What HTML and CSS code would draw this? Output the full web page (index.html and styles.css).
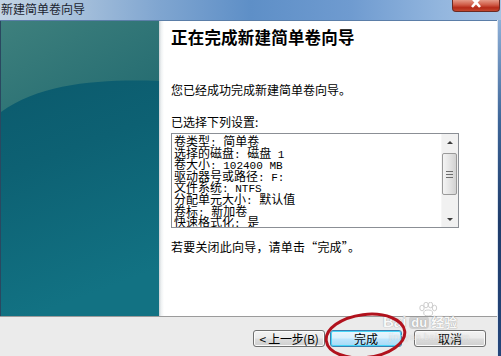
FILE: index.html
```html
<!DOCTYPE html>
<html lang="zh-CN">
<head>
<meta charset="utf-8">
<title>新建简单卷向导</title>
<link rel="stylesheet" href="styles.css">
</head>
<body>
<div class="window">
  <div class="titlebar">
    <span class="title">新建简单卷向导</span>
    <div class="close">
      <svg width="14" height="10" viewBox="0 0 14 10"><path d="M3 -2 L11 7 M11 -2 L3 7" stroke="#fff" stroke-width="2.6" fill="none"/></svg>
    </div>
  </div>
  <div class="body">
    <div class="client">
      <div class="main">
        <div class="side">
          <svg class="side-art" width="158" height="295" viewBox="0 0 158 295" preserveAspectRatio="none">
            <defs>
              <linearGradient id="gBase" x1="0" y1="0" x2="0.2" y2="1">
                <stop offset="0" stop-color="#0a5669"/>
                <stop offset="0.5" stop-color="#0d6173"/>
                <stop offset="1" stop-color="#127283"/>
              </linearGradient>
              <linearGradient id="gTop" x1="0" y1="0" x2="1" y2="1">
                <stop offset="0" stop-color="#3e807d"/>
                <stop offset="1" stop-color="#226a70"/>
              </linearGradient>
            </defs>
            <rect width="158" height="295" fill="url(#gBase)"/>
            <path d="M0 0 H158 V60 C100 58 40 62 0 91 Z" fill="url(#gTop)"/>
          </svg>
        </div>
        <div class="content">
          <h1 class="heading">正在完成新建简单卷向导</h1>
          <p class="line p1">您已经成功完成新建简单卷向导。</p>
          <p class="line p2">已选择下列设置:</p>
          <div class="listbox">
            <div class="list-text">
              <div class="item">卷类型<span class="a">: </span>简单卷</div>
              <div class="item">选择的磁盘<span class="a">: </span>磁盘<span class="a"> 1</span></div>
              <div class="item">卷大小<span class="a">: 102400 MB</span></div>
              <div class="item">驱动器号或路径<span class="a">: F:</span></div>
              <div class="item">文件系统<span class="a">: NTFS</span></div>
              <div class="item">分配单元大小<span class="a">: </span>默认值</div>
              <div class="item">卷标<span class="a">: </span>新加卷</div>
              <div class="item">快速格式化<span class="a">: </span>是</div>
            </div>
            <div class="scrollbar">
              <div class="arrow up"></div>
              <div class="track">
                <div class="thumb"><span></span><span></span><span></span></div>
              </div>
              <div class="arrow down"></div>
            </div>
          </div>
          <p class="line p3">若要关闭此向导，请单击“完成”。</p>
        </div>
      </div>
      <div class="footer">
        <button class="btn back">&lt; 上一步(B)</button>
        <button class="btn finish">完成</button>
        <button class="btn cancel">取消</button>
      </div>
    </div>
    <div class="rframe"></div>
  </div>

  <div class="watermark">
    <svg class="paw" width="22" height="14" viewBox="0 0 22 14">
      <g fill="#fff" stroke="#a8a8a8" stroke-width="0.8">
        <ellipse cx="5" cy="6" rx="2.2" ry="2.8"/>
        <ellipse cx="9" cy="3" rx="2.2" ry="2.8"/>
        <ellipse cx="13.5" cy="3" rx="2.2" ry="2.8"/>
        <ellipse cx="17.5" cy="6" rx="2.2" ry="2.8"/>
        <ellipse cx="11.2" cy="11" rx="4.5" ry="3"/>
      </g>
    </svg>
    <div class="wm-row"><span class="wm-bai">Bai</span><span class="wm-du">du</span><span class="wm-jy">经验</span></div>
    <div class="wm-url">jingyan.baidu.com</div>
  </div>

  <svg class="mark" width="501" height="356" viewBox="0 0 501 356">
    <ellipse cx="365.5" cy="336" rx="39.5" ry="21.5" transform="rotate(-7 365.5 336)" fill="none" stroke="#b1121d" stroke-width="3"/>
  </svg>
</div>
</body>
</html>
```

FILE: styles.css
```css
* { box-sizing: border-box; }
html, body {
  margin: 0;
  padding: 0;
  width: 501px;
  height: 356px;
  overflow: hidden;
}
body {
  font-family: "Noto Sans CJK SC", "Liberation Sans", sans-serif;
  color: #000;
}
.window {
  position: relative;
  width: 501px;
  height: 356px;
  display: flex;
  flex-direction: column;
  background: #6f9ccf;
}
.titlebar {
  height: 20px;
  flex: 0 0 20px;
  display: flex;
  align-items: flex-start;
  justify-content: space-between;
  background: linear-gradient(90deg, #c3d4e4 0%, #a9c2dc 14%, #7fa5d0 32%, #5e8fc7 50%, #6f9bd0 70%, #93b6de 88%, #a6c3e4 100%);
}
.title {
  font-size: 12px;
  line-height: 16px;
  margin: 1px 0 0 1px;
  color: #1b2430;
}
.close {
  width: 48px;
  height: 12px;
  margin-right: 1px;
  border: 1px solid #6c2a22;
  border-top: none;
  border-radius: 0 0 4px 4px;
  background: linear-gradient(#e59a88, #cf5a45 45%, #b52a18 70%, #c2482f);
  display: flex;
  justify-content: center;
  align-items: flex-start;
}
.body {
  flex: 1;
  display: flex;
}
.client {
  width: 497px;
  display: flex;
  flex-direction: column;
  border-top: 1px solid #5b7ea8;
  background: #fff;
}
.main {
  height: 295px;
  flex: 0 0 295px;
  display: flex;
}
.side {
  width: 159px;
  flex: 0 0 159px;
  border-left: 1px solid #2a4860;
  display: flex;
}
.side-art {
  display: block;
  width: 158px;
  height: 295px;
}
.content {
  flex: 1;
  display: flex;
  flex-direction: column;
  padding: 6px 0 0 12px;
  background: linear-gradient(90deg, #c9d0d4 0px, #eef1f2 2px, #fff 5px);
}
.heading {
  margin: 0;
  font-size: 16.5px;
  line-height: 20px;
  font-weight: bold;
  letter-spacing: 0.2px;
}
.line {
  margin: 0;
  font-size: 12px;
  line-height: 16px;
}
.p1 { margin-top: 35px; }
.p2 { margin-top: 16px; }
.p3 { margin-top: 11px; letter-spacing: 0.2px; }
.listbox {
  margin-top: 3px;
  width: 288px;
  height: 95px;
  border: 1px solid #8b8f95;
  display: flex;
  overflow: hidden;
}
.list-text {
  flex: 1;
  padding: 1px 0 0 2px;
  font-size: 12px;
  overflow: hidden;
  white-space: nowrap;
}
.item {
  height: 11.6px;
  line-height: 11.6px;
}
.list-text .a {
  font-family: "Liberation Mono", monospace;
  font-size: 11px;
  white-space: pre;
}
.scrollbar {
  width: 17px;
  flex: 0 0 17px;
  display: flex;
  flex-direction: column;
  background: #f1f1f1;
  border-left: 1px solid #f6f6f6;
}
.arrow {
  height: 17px;
  flex: 0 0 17px;
  display: flex;
  justify-content: center;
  align-items: center;
}
.arrow::before {
  content: "";
  width: 0;
  height: 0;
  border-left: 3.5px solid transparent;
  border-right: 3.5px solid transparent;
}
.arrow.up::before { border-bottom: 3.5px solid #3c3c3c; }
.arrow.down::before { border-top: 3.5px solid #3c3c3c; margin-top: 2px; }
.track {
  flex: 1;
  padding-top: 2px;
}
.thumb {
  height: 42px;
  margin-right: 1px;
  border: 1px solid #9a9a9a;
  border-radius: 2px;
  background: linear-gradient(90deg, #f4f4f4, #e4e4e4 50%, #d2d2d2);
  display: flex;
  flex-direction: column;
  justify-content: center;
  align-items: center;
  gap: 2px;
}
.thumb span {
  display: block;
  width: 7px;
  height: 1px;
  background: #6d6d6d;
}
.footer {
  flex: 1;
  border-top: 1px solid #9b9b9b;
  background: #ebebeb;
  display: flex;
  align-items: flex-start;
  padding: 13px 11px 0 0;
  justify-content: flex-end;
}
.btn {
  width: 72px;
  height: 17px;
  padding: 0;
  font-family: "Noto Sans CJK SC", "Liberation Sans", sans-serif;
  font-size: 12px;
  line-height: 15px;
  color: #000;
  border: 1px solid #707070;
  border-radius: 3px;
  background: linear-gradient(#f3f3f3, #ebebeb 48%, #dddddd 52%, #cfcfcf);
  box-shadow: inset 0 0 0 1px #fbfbfb;
}
.back { letter-spacing: -0.3px; }
.finish {
  margin-left: 5px;
  border-color: #3c7fb1;
  background: linear-gradient(#eaf6fd, #d9f0fc 48%, #bee6fd 52%, #a7d9f5);
  box-shadow: inset 0 0 0 1px #48d6f8;
}
.cancel { margin-left: 12px; }
.rframe {
  width: 4px;
  flex: 0 0 4px;
  border-left: 1px solid #dbe4ee;
  background: linear-gradient(#8eb0d8, #3d6598 30%, #1f3c6b 60%, #24457a);
}
.mark {
  position: absolute;
  left: 0;
  top: 0;
  pointer-events: none;
}
.watermark {
  position: absolute;
  left: 383px;
  top: 302px;
  width: 90px;
  height: 44px;
  pointer-events: none;
  opacity: 0.7;
}
.paw {
  position: absolute;
  left: 34px;
  top: 0;
}
.wm-row {
  position: absolute;
  left: 0;
  top: 12px;
  display: flex;
  align-items: center;
  font-family: "Liberation Sans", sans-serif;
  font-weight: bold;
  font-size: 15px;
  line-height: 16px;
  color: #fff;
  text-shadow: 0 0 1px #8a8a8a, 0 0 1px #8a8a8a;
}
.wm-du {
  margin-left: 3px;
  padding: 0 2px;
  border-radius: 4px;
  background: rgba(150,150,150,0.45);
  line-height: 13px;
  font-size: 13px;
}
.wm-jy {
  margin-left: 2px;
  font-family: "Noto Sans CJK SC", sans-serif;
  font-size: 13px;
}
.wm-url {
  position: absolute;
  left: 6px;
  top: 30px;
  font-family: "Liberation Sans", sans-serif;
  font-size: 9px;
  color: rgba(255,255,255,0.7);
  text-shadow: 0 0 1px #aaa;
  letter-spacing: 0.5px;
}
```
